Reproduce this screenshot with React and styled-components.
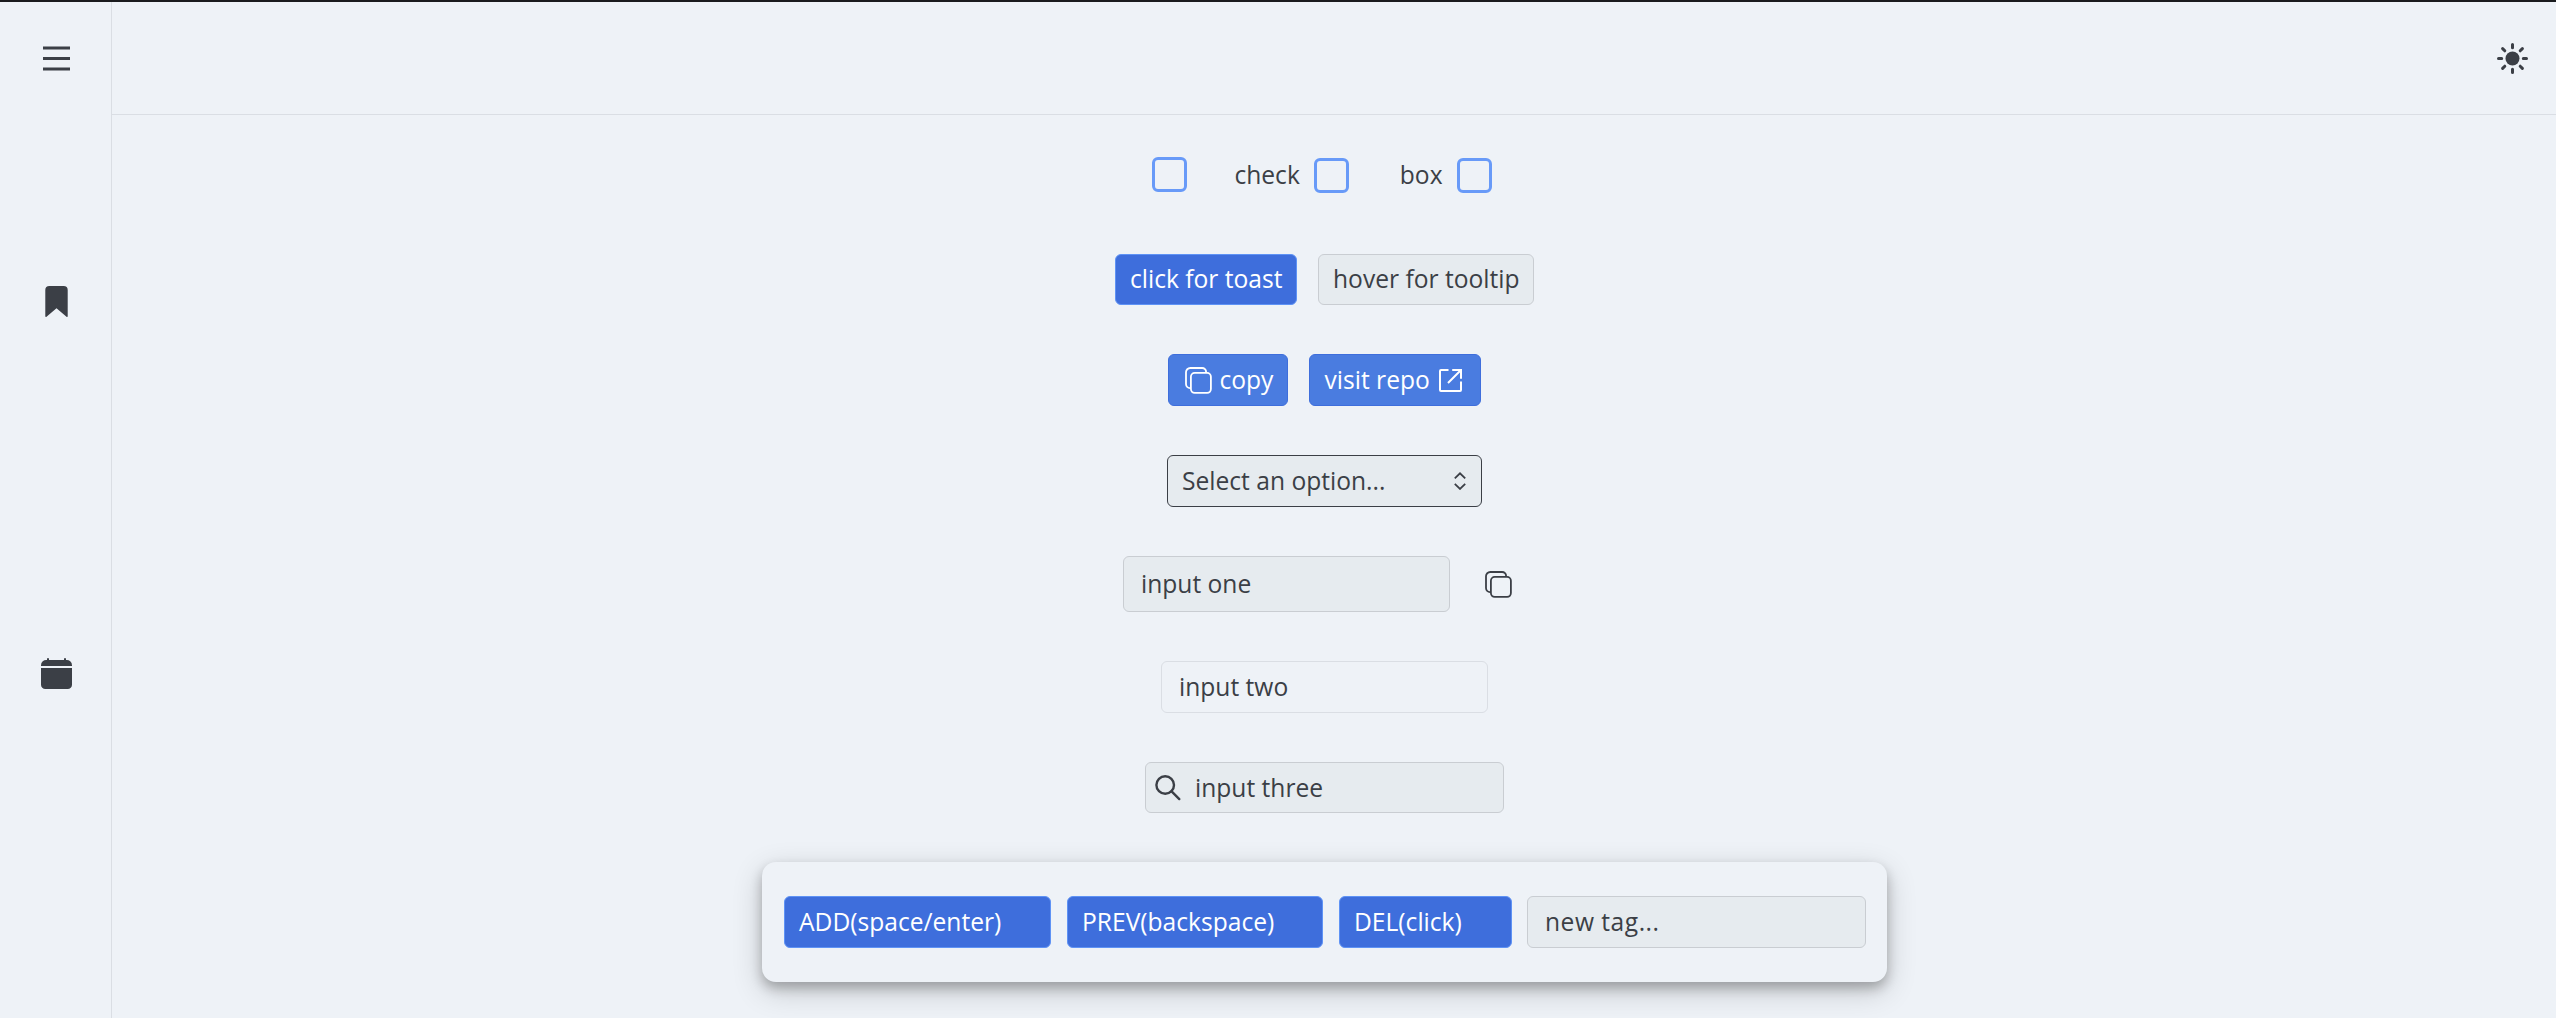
import React from "react";
import styled, { createGlobalStyle, css } from "styled-components";

const ink = "#3b3f46";
const page = "#eef2f7";
const field = "#e6ebef";
const line = "#dadee4";

const GlobalStyle = createGlobalStyle`
  *, *::before, *::after { box-sizing: border-box; }
  html, body { margin: 0; background: ${page}; }
  body { font-family: "Open Sans", sans-serif; font-size: 24.6px; line-height: 34px; color: ${ink}; overflow: hidden; }
  svg { display: block; flex: none; }
`;

const Shell = styled.div`
  display: grid;
  grid-template-columns: 112px 1fr;
  height: 1018px;
  border-top: 2px solid #1a1b1e;
  background: ${page};
`;

const Sidebar = styled.aside`
  border-right: 1px solid ${line};
  padding-left: 1px;
  overflow: hidden;
`;

const MenuButton = styled.div`
  display: flex;
  align-items: center;
  justify-content: center;
  height: 113px;
`;

const NavItem = styled.div`
  display: flex;
  align-items: center;
  justify-content: center;
  height: 372px;
`;

const Body = styled.div`
  display: flex;
  flex-direction: column;
  min-width: 0;
`;

const Header = styled.header`
  display: flex;
  align-items: center;
  justify-content: flex-end;
  flex: none;
  height: 113px;
  padding-right: 27px;
  border-bottom: 1px solid ${line};
`;

const Main = styled.main`
  display: flex;
  flex-direction: column;
  align-items: center;
  gap: 49px;
  padding: 42px 19px 0 0;
`;

const Row = styled.div`
  display: flex;
  align-items: center;
  gap: ${(p) => p.$gap || 0}px;
`;

const CheckRow = styled.div`
  display: flex;
  align-items: flex-start;
  height: 48px;
  padding-right: 5px;
`;

const CheckLabel = styled.label`
  display: flex;
  align-items: center;
  gap: 14px;
  height: 35px;
  margin-left: ${(p) => p.$offset || 0}px;
  margin-top: ${(p) => p.$drop || 0}px;
`;

const CheckText = styled.span`
  padding-bottom: 1px;
`;

const CheckBox = styled.span`
  width: 35px;
  height: 35px;
  border: 3px solid #689af8;
  border-radius: 6px;
`;

const Button = styled.button`
  display: flex;
  align-items: center;
  flex: none;
  width: ${(p) => p.$width}px;
  height: ${(p) => p.$height || 52}px;
  padding: 0 0 ${(p) => (p.$height === 51 ? 1 : 0)}px ${(p) => p.$inset || 14}px;
  font: inherit;
  white-space: nowrap;
  border-radius: 6px;
  border: 1px solid #c9cdd2;
  background: ${field};
  color: ${ink};
  ${(p) => p.$tone === "strong" && css`background: #3e6edc; border-color: #5f93f5; color: #fff;`}
  ${(p) => p.$tone === "soft" && css`background: #4a7ce0; border-color: #3e6edc; color: #fff;`}
`;

const Select = styled.div`
  display: flex;
  align-items: center;
  justify-content: space-between;
  width: 315px;
  height: 52px;
  padding: 0 15.5px 0 14px;
  border: 1px solid ${ink};
  border-radius: 6px;
  background: ${field};
`;

const Field = styled.div`
  display: flex;
  align-items: center;
  flex: none;
  width: ${(p) => p.$width}px;
  height: ${(p) => p.$height || 52}px;
  padding-left: ${(p) => p.$inset || 17}px;
  gap: 14px;
  white-space: nowrap;
  letter-spacing: ${(p) => p.$track || 0}px;
  border: 1px solid ${(p) => (p.$ghost ? line : "#c9cdd2")};
  border-radius: 6px;
  background: ${(p) => (p.$ghost ? page : field)};
`;

const TagPanel = styled.section`
  display: flex;
  align-items: center;
  width: 1125px;
  height: 120px;
  padding: 0 21px 0 22px;
  border-radius: 14px;
  background: ${page};
  box-shadow: 0 6px 12px rgba(0, 0, 0, 0.24), 0 9px 30px rgba(0, 0, 0, 0.19);
`;

const Tags = styled.div`
  display: flex;
  gap: 16px;
  margin-right: 15px;
`;

const IconSlot = styled.span`
  display: flex;
  margin-left: ${(p) => p.$left || 0}px;
  margin-right: ${(p) => p.$right || 0}px;
`;

const Menu = () => (
  <svg width="33" height="33" viewBox="0 0 33 33" fill="none" stroke={ink} strokeWidth="2.8">
    <path d="M3 6H30M3 16.5H30M3 27H30" />
  </svg>
);

const Bookmark = () => (
  <svg width="33" height="33" viewBox="0 0 33 33" fill={ink}>
    <path d="M9.4 1h14.2a4.1 4.1 0 0 1 4.1 4.1V31q0 1.3-1.2.7L16.5 23.3 6.5 31.7q-1.2.6-1.2-.7V5.1A4.1 4.1 0 0 1 9.4 1Z" />
  </svg>
);

const Calendar = () => (
  <svg width="33" height="33" viewBox="0 0 33 33" fill={ink}>
    <path d="M7 2a1 1 0 0 1 2 0v1h15V2a1 1 0 0 1 2 0v1.1a5.2 5.2 0 0 1 6 5.3V9H1v-.6a5.2 5.2 0 0 1 6-5.3ZM1 11h31v16.7a4.3 4.3 0 0 1-4.3 4.3H5.3A4.3 4.3 0 0 1 1 27.7Z" />
  </svg>
);

const Sun = () => (
  <svg width="33" height="33" viewBox="-16.5 -16.5 33 33" stroke={ink} strokeWidth="3" strokeLinecap="round">
    <circle r="7" fill={ink} stroke="none" />
    <path d="M0-14V-10.8M0 14V10.8M-14 0H-10.8M14 0H10.8M-9.9-9.9-7.7-7.7M9.9 9.9 7.7 7.7M-9.9 9.9-7.7 7.7M9.9-9.9 7.7-7.7" />
  </svg>
);

const Copy = () => (
  <svg width="27" height="27" viewBox="0 0 27 27" fill="none" stroke="currentColor" strokeWidth="1.8" strokeLinejoin="round">
    <rect x="5.9" y="5.9" width="20" height="20" rx="3.8" />
    <path d="M21.1 5.9v-.8A4 4 0 0 0 17.1 1H5.3A4.3 4.3 0 0 0 1 5.3v11.8a4 4 0 0 0 4 4h.9" />
  </svg>
);

const External = () => (
  <svg width="23" height="23" viewBox="0 0 23 23" fill="none" stroke="currentColor" strokeWidth="2">
    <path d="M9.5 1H2a1 1 0 0 0-1 1v19a1 1 0 0 0 1 1h19a1 1 0 0 0 1-1v-8.5M13.2 1H22v8.8M22 1 9 14" />
  </svg>
);

const UpDown = () => (
  <svg width="12" height="18" viewBox="0 0 12 18" fill="none" stroke={ink} strokeWidth="1.8">
    <path d="M.8 6.4 6 1.3 11.2 6.4M.8 11.8 6 16.9 11.2 11.8" />
  </svg>
);

const Search = () => (
  <svg width="26" height="26" viewBox="0 0 26 26" fill="none" stroke={ink} strokeWidth="2.4" strokeLinecap="round">
    <circle cx="10.2" cy="10" r="8.8" />
    <path d="m16.6 16.4 7.7 7.7" />
  </svg>
);

const tags = [
  { text: "ADD(space/enter)", width: 267 },
  { text: "PREV(backspace)", width: 256 },
  { text: "DEL(click)", width: 173 },
];

export default function App() {
  return (
    <>
      <GlobalStyle />
      <Shell>
        <Sidebar>
          <MenuButton><Menu /></MenuButton>
          <NavItem><Bookmark /></NavItem>
          <NavItem><Calendar /></NavItem>
        </Sidebar>
        <Body>
          <Header><Sun /></Header>
          <Main>
            <CheckRow>
              <CheckLabel><CheckBox /></CheckLabel>
              <CheckLabel $offset={47} $drop={1}><CheckText>check</CheckText><CheckBox /></CheckLabel>
              <CheckLabel $offset={51} $drop={1}><CheckText>box</CheckText><CheckBox /></CheckLabel>
            </CheckRow>
            <Row $gap={21}>
              <Button $tone="strong" $width={182} $height={51}>click for toast</Button>
              <Button $width={216} $height={51}>hover for tooltip</Button>
            </Row>
            <Row $gap={21}>
              <Button $tone="soft" $width={120} $inset={15.5}>
                <IconSlot $right={8}><Copy /></IconSlot>copy
              </Button>
              <Button $tone="soft" $width={172} $inset={14.5}>
                visit repo<IconSlot $left={9}><External /></IconSlot>
              </Button>
            </Row>
            <Select>Select an option...<UpDown /></Select>
            <Row $gap={35}>
              <Field $width={327} $height={56}>input one</Field>
              <IconSlot $right={14}><Copy /></IconSlot>
            </Row>
            <Field $ghost $width={327}>input two</Field>
            <Field $width={359} $height={51} $inset={9}><Search />input three</Field>
            <TagPanel>
              <Tags>
                {tags.map((tag) => (
                  <Button key={tag.text} $tone="strong" $width={tag.width} $inset={14}>{tag.text}</Button>
                ))}
              </Tags>
              <Field $width={339} $track={0.5}>new tag...</Field>
            </TagPanel>
          </Main>
        </Body>
      </Shell>
    </>
  );
}
